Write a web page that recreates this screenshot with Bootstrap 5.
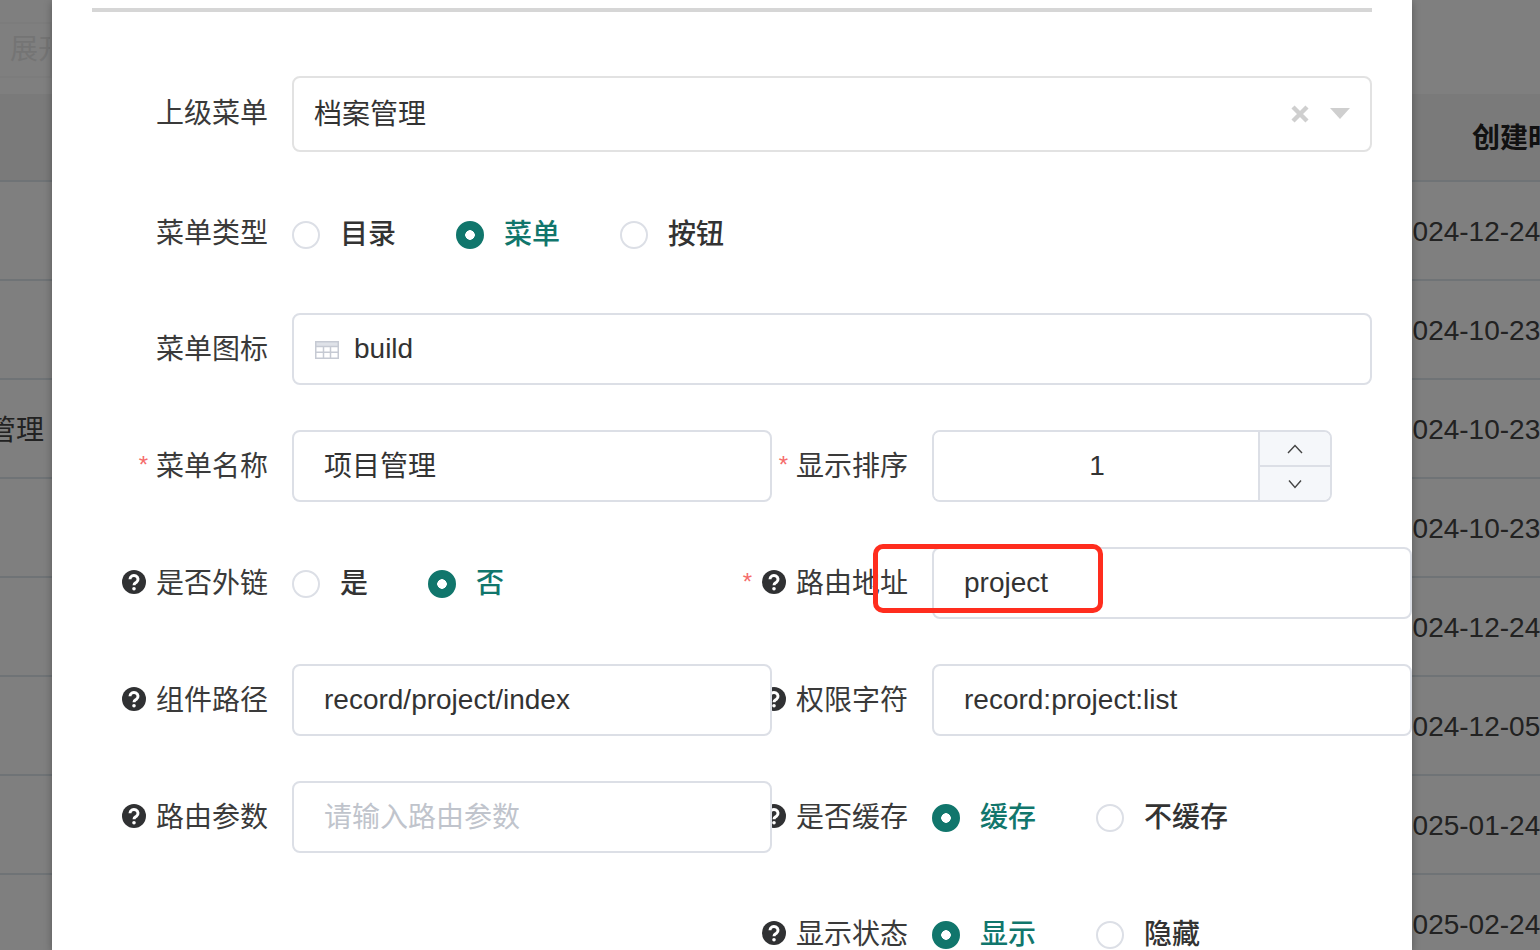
<!DOCTYPE html>
<html lang="zh-CN">
<head>
<meta charset="utf-8">
<title>添加菜单</title>
<link href="https://cdn.jsdelivr.net/npm/bootstrap@5.3.0/dist/css/bootstrap.min.css" rel="stylesheet">
<style>
html, body { height: 950px; overflow: hidden; }
body { font-family: "Liberation Sans", "Noto Sans CJK SC", sans-serif; font-size: 28px; color: #333; background: #fff; }
.stage { position: relative; width: 1540px; height: 950px; overflow: hidden; }
.searchband { height: 94px; padding-top: 22px; }
.foldbtn { height: 56px; width: 72px; margin-left: -20px; padding-left: 28px; border: 2px solid #f8f8f8; color: #e9e9e9; line-height: 52px; white-space: nowrap; overflow: hidden; }
.bgtable { table-layout: fixed; width: 1540px; margin: 0; }
.bgtable th, .bgtable td { padding: 2px 0 0; border-bottom: 2px solid #dfe6ec; vertical-align: middle; white-space: nowrap; background: transparent; box-shadow: none; color: #444; font-size: 28px; font-weight: 400; overflow: hidden; }
.bgtable thead tr { height: 87px; background: #f4f4f5; }
.bgtable thead th { font-weight: 700; color: #222; padding-top: 4px; }
.bgtable tbody tr { height: 99px; }
.colname { width: 44px; }
.coldate { width: 143px; }
.bgtable .headcreate { padding-left: 75px; }
.namecut { margin-left: -12px; margin-top: 2px; }
.veil { position: absolute; inset: 0; background: rgba(0,0,0,.5); }
.dialogbox { position: absolute; left: 52px; top: 0; width: 1360px; height: 950px; background: #fff; box-shadow: 0 2px 8px rgba(0,0,0,.3); overflow: hidden; padding: 8px 0 0 40px; }
.rulebar { width: 1280px; height: 4px; background: #d6d6d6; margin-bottom: 64px; }
.fline { height: 72px; margin-bottom: 45px; }
.fline.tall { height: 76px; margin-bottom: 46px; }
.fline.radio-first { margin-bottom: 43px; }
.cellleft { width: 680px; flex: none; position: relative; z-index: 1; }
.cellright { width: 640px; flex: none; }
.cellfull { width: 1280px; flex: none; }
.fieldlabel { flex: none; padding-right: 24px; padding-top: 2px; white-space: nowrap; line-height: 1; color: #3a3a3a; }
.fline.tall .fieldlabel, .fline.radio-first .fieldlabel { padding-top: 0; }
.cellleft .fieldlabel, .cellfull .fieldlabel { width: 200px; }
.cellright .fieldlabel { width: 160px; }
.reqstar { color: #f56c6c; font-size: 24px; margin-right: 8px; align-self: flex-start; line-height: 1; margin-top: 0; }
.hint { width: 24px; height: 24px; flex: none; margin-right: 10px; margin-top: -4px; }
.reqstar + .hint { margin-left: 2px; }
.textinput.form-control { height: 100%; font-size: 28px; color: #333; border: 2px solid #dcdfe6; border-radius: 8px; padding: 0 30px; box-shadow: none; font-family: inherit; }
.textinput.form-control::placeholder { color: #c0c4cc; opacity: 1; }
.textinput.form-control.cjkvalue { padding-bottom: 4px; }
.textinput.form-control.cjkhint { padding-top: 2px; }
.selectwrap .textinput.form-control { padding-left: 20px; border-color: #e2e2e2; }
.clearx { position: absolute; right: 62px; top: 28px; width: 20px; height: 20px; }
.caretdown { position: absolute; right: 22px; top: 32px; width: 20px; height: 11px; }
.iconwrap .textinput.form-control { padding-left: 60px; }
.tblicon { position: absolute; left: 23px; top: 28px; width: 24px; height: 18px; }
.numbox { width: 400px; height: 72px; border: 2px solid #dcdfe6; border-radius: 8px; overflow: hidden; }
.numbox .numvalue.form-control { height: 100%; border: 0; border-radius: 0; box-shadow: none; font-size: 28px; color: #333; text-align: center; padding: 0 0 0 2px; font-family: inherit; }
.stepper { width: 72px; flex: none; background: #f5f7fa; border-left: 2px solid #dcdfe6; }
.stepbtn { flex: 1 1 0; }
.stepbtn + .stepbtn { border-top: 2px solid #dcdfe6; }
.stepbtn svg { width: 16px; height: 10px; }
.radioset { height: 72px; padding-top: 2px; }
.radioopt { margin-right: 60px; font-weight: 500; line-height: 1; color: #333; white-space: nowrap; }
.radioopt .form-check-input { width: 28px; height: 28px; margin: 0 20px 0 0; border: 2px solid #dcdfe6; flex: none; box-shadow: none; background-color: #fff; background-image: none; }
.radioopt .form-check-input:checked { background-color: #11766c; border-color: #11766c; background-image: radial-gradient(circle, #fff 4.5px, transparent 5px); }
.radioopt.picked { color: #11766c; }
.callout { position: absolute; left: 873px; top: 544px; width: 230px; height: 69px; border: 5px solid #ff2d1e; border-radius: 10px; }
</style>
</head>
<body>
<div class="stage">
  <div class="searchband"><div class="foldbtn">展开</div></div>
  <table class="table bgtable">
    <colgroup><col class="colname"><col><col class="coldate"></colgroup>
    <thead><tr><th></th><th></th><th class="headcreate">创建时间</th></tr></thead>
    <tbody>
      <tr><td></td><td></td><td>2024-12-24</td></tr>
      <tr><td></td><td></td><td>2024-10-23</td></tr>
      <tr><td><span class="namecut d-inline-block">管理</span></td><td></td><td>2024-10-23</td></tr>
      <tr><td></td><td></td><td>2024-10-23</td></tr>
      <tr><td></td><td></td><td>2024-12-24</td></tr>
      <tr><td></td><td></td><td>2024-12-05</td></tr>
      <tr><td></td><td></td><td>2025-01-24</td></tr>
      <tr><td></td><td></td><td>2025-02-24</td></tr>
    </tbody>
  </table>
  <div class="veil"></div>

  <div class="dialogbox">
    <div class="rulebar"></div>

    <div class="fline tall d-flex">
      <div class="cellfull d-flex align-items-center">
        <div class="fieldlabel d-flex justify-content-end align-items-center">上级菜单</div>
        <div class="selectwrap position-relative flex-grow-1 h-100">
          <input class="form-control textinput cjkvalue" type="text" value="档案管理">
          <svg class="clearx" viewBox="0 0 20 20"><path d="M3 3l14 14M17 3L3 17" stroke="#cfcfcf" stroke-width="4.4" fill="none"/></svg>
          <svg class="caretdown" viewBox="0 0 20 11"><path d="M0 0h20L10 11z" fill="#cfcfcf"/></svg>
        </div>
      </div>
    </div>

    <div class="fline radio-first d-flex">
      <div class="cellfull d-flex align-items-center">
        <div class="fieldlabel d-flex justify-content-end align-items-center">菜单类型</div>
        <div class="radioset d-flex align-items-center">
          <label class="radioopt d-flex align-items-center"><input class="form-check-input" type="radio" name="mtype">目录</label>
          <label class="radioopt picked d-flex align-items-center"><input class="form-check-input" type="radio" name="mtype" checked>菜单</label>
          <label class="radioopt d-flex align-items-center"><input class="form-check-input" type="radio" name="mtype">按钮</label>
        </div>
      </div>
    </div>

    <div class="fline d-flex">
      <div class="cellfull d-flex align-items-center h-100">
        <div class="fieldlabel d-flex justify-content-end align-items-center">菜单图标</div>
        <div class="iconwrap position-relative flex-grow-1 h-100">
          <input class="form-control textinput" type="text" value="build">
          <svg class="tblicon" viewBox="0 0 24 18"><path d="M0 0h24v5H0z" fill="#dfe2e8"/><path d="M.75.75h22.5v16.5H.75zM.75 5.5h22.5M.75 11.25h22.5M8.5 5.5v11.75M15.5 5.5v11.75" fill="none" stroke="#c6cad3" stroke-width="1.5"/></svg>
        </div>
      </div>
    </div>

    <div class="fline d-flex">
      <div class="cellleft d-flex align-items-center h-100">
        <div class="fieldlabel d-flex justify-content-end align-items-center"><span class="reqstar">*</span>菜单名称</div>
        <div class="flex-grow-1 h-100"><input class="form-control textinput cjkvalue" type="text" value="项目管理"></div>
      </div>
      <div class="cellright d-flex align-items-center h-100">
        <div class="fieldlabel d-flex justify-content-end align-items-center"><span class="reqstar">*</span>显示排序</div>
        <div class="numbox d-flex">
          <input class="form-control numvalue" type="text" value="1">
          <div class="stepper d-flex flex-column">
            <div class="stepbtn d-flex align-items-center justify-content-center"><svg viewBox="0 0 16 10"><path d="M1 9l7-7.5L15 9" fill="none" stroke="#444" stroke-width="1.4"/></svg></div>
            <div class="stepbtn d-flex align-items-center justify-content-center"><svg viewBox="0 0 16 10"><path d="M2 1.5l6 7 6-7" fill="none" stroke="#444" stroke-width="1.4"/></svg></div>
          </div>
        </div>
      </div>
    </div>

    <div class="fline d-flex">
      <div class="cellleft d-flex align-items-center h-100">
        <div class="fieldlabel d-flex justify-content-end align-items-center">
          <svg class="hint" viewBox="0 0 24 24"><circle cx="12" cy="12" r="12" fill="#303133"/><path d="M8 9.3a4 3.8 0 1 1 6.4 3c-1.5 1-2.4 1.4-2.4 3" fill="none" stroke="#fff" stroke-width="3"/><circle cx="12" cy="18.7" r="1.8" fill="#fff"/></svg>是否外链</div>
        <div class="radioset d-flex align-items-center">
          <label class="radioopt d-flex align-items-center"><input class="form-check-input" type="radio" name="ext">是</label>
          <label class="radioopt picked d-flex align-items-center"><input class="form-check-input" type="radio" name="ext" checked>否</label>
        </div>
      </div>
      <div class="cellright d-flex align-items-center h-100">
        <div class="fieldlabel d-flex justify-content-end align-items-center"><span class="reqstar">*</span><svg class="hint" viewBox="0 0 24 24"><circle cx="12" cy="12" r="12" fill="#303133"/><path d="M8 9.3a4 3.8 0 1 1 6.4 3c-1.5 1-2.4 1.4-2.4 3" fill="none" stroke="#fff" stroke-width="3"/><circle cx="12" cy="18.7" r="1.8" fill="#fff"/></svg>路由地址</div>
        <div class="flex-grow-1 h-100"><input class="form-control textinput" type="text" value="project"></div>
      </div>
    </div>

    <div class="fline d-flex">
      <div class="cellleft d-flex align-items-center h-100">
        <div class="fieldlabel d-flex justify-content-end align-items-center">
          <svg class="hint" viewBox="0 0 24 24"><circle cx="12" cy="12" r="12" fill="#303133"/><path d="M8 9.3a4 3.8 0 1 1 6.4 3c-1.5 1-2.4 1.4-2.4 3" fill="none" stroke="#fff" stroke-width="3"/><circle cx="12" cy="18.7" r="1.8" fill="#fff"/></svg>组件路径</div>
        <div class="flex-grow-1 h-100"><input class="form-control textinput" type="text" value="record/project/index"></div>
      </div>
      <div class="cellright d-flex align-items-center h-100">
        <div class="fieldlabel d-flex justify-content-end align-items-center">
          <svg class="hint" viewBox="0 0 24 24"><circle cx="12" cy="12" r="12" fill="#303133"/><path d="M8 9.3a4 3.8 0 1 1 6.4 3c-1.5 1-2.4 1.4-2.4 3" fill="none" stroke="#fff" stroke-width="3"/><circle cx="12" cy="18.7" r="1.8" fill="#fff"/></svg>权限字符</div>
        <div class="flex-grow-1 h-100"><input class="form-control textinput" type="text" value="record:project:list"></div>
      </div>
    </div>

    <div class="fline d-flex">
      <div class="cellleft d-flex align-items-center h-100">
        <div class="fieldlabel d-flex justify-content-end align-items-center">
          <svg class="hint" viewBox="0 0 24 24"><circle cx="12" cy="12" r="12" fill="#303133"/><path d="M8 9.3a4 3.8 0 1 1 6.4 3c-1.5 1-2.4 1.4-2.4 3" fill="none" stroke="#fff" stroke-width="3"/><circle cx="12" cy="18.7" r="1.8" fill="#fff"/></svg>路由参数</div>
        <div class="flex-grow-1 h-100"><input class="form-control textinput cjkhint" type="text" placeholder="请输入路由参数"></div>
      </div>
      <div class="cellright d-flex align-items-center h-100">
        <div class="fieldlabel d-flex justify-content-end align-items-center">
          <svg class="hint" viewBox="0 0 24 24"><circle cx="12" cy="12" r="12" fill="#303133"/><path d="M8 9.3a4 3.8 0 1 1 6.4 3c-1.5 1-2.4 1.4-2.4 3" fill="none" stroke="#fff" stroke-width="3"/><circle cx="12" cy="18.7" r="1.8" fill="#fff"/></svg>是否缓存</div>
        <div class="radioset d-flex align-items-center">
          <label class="radioopt picked d-flex align-items-center"><input class="form-check-input" type="radio" name="cache" checked>缓存</label>
          <label class="radioopt d-flex align-items-center"><input class="form-check-input" type="radio" name="cache">不缓存</label>
        </div>
      </div>
    </div>

    <div class="fline d-flex">
      <div class="cellleft"></div>
      <div class="cellright d-flex align-items-center h-100">
        <div class="fieldlabel d-flex justify-content-end align-items-center">
          <svg class="hint" viewBox="0 0 24 24"><circle cx="12" cy="12" r="12" fill="#303133"/><path d="M8 9.3a4 3.8 0 1 1 6.4 3c-1.5 1-2.4 1.4-2.4 3" fill="none" stroke="#fff" stroke-width="3"/><circle cx="12" cy="18.7" r="1.8" fill="#fff"/></svg>显示状态</div>
        <div class="radioset d-flex align-items-center">
          <label class="radioopt picked d-flex align-items-center"><input class="form-check-input" type="radio" name="vis" checked>显示</label>
          <label class="radioopt d-flex align-items-center"><input class="form-check-input" type="radio" name="vis">隐藏</label>
        </div>
      </div>
    </div>
  </div>

  <div class="callout"></div>
</div>
<script src="https://cdn.jsdelivr.net/npm/bootstrap@5.3.0/dist/js/bootstrap.bundle.min.js"></script>
</body>
</html>
